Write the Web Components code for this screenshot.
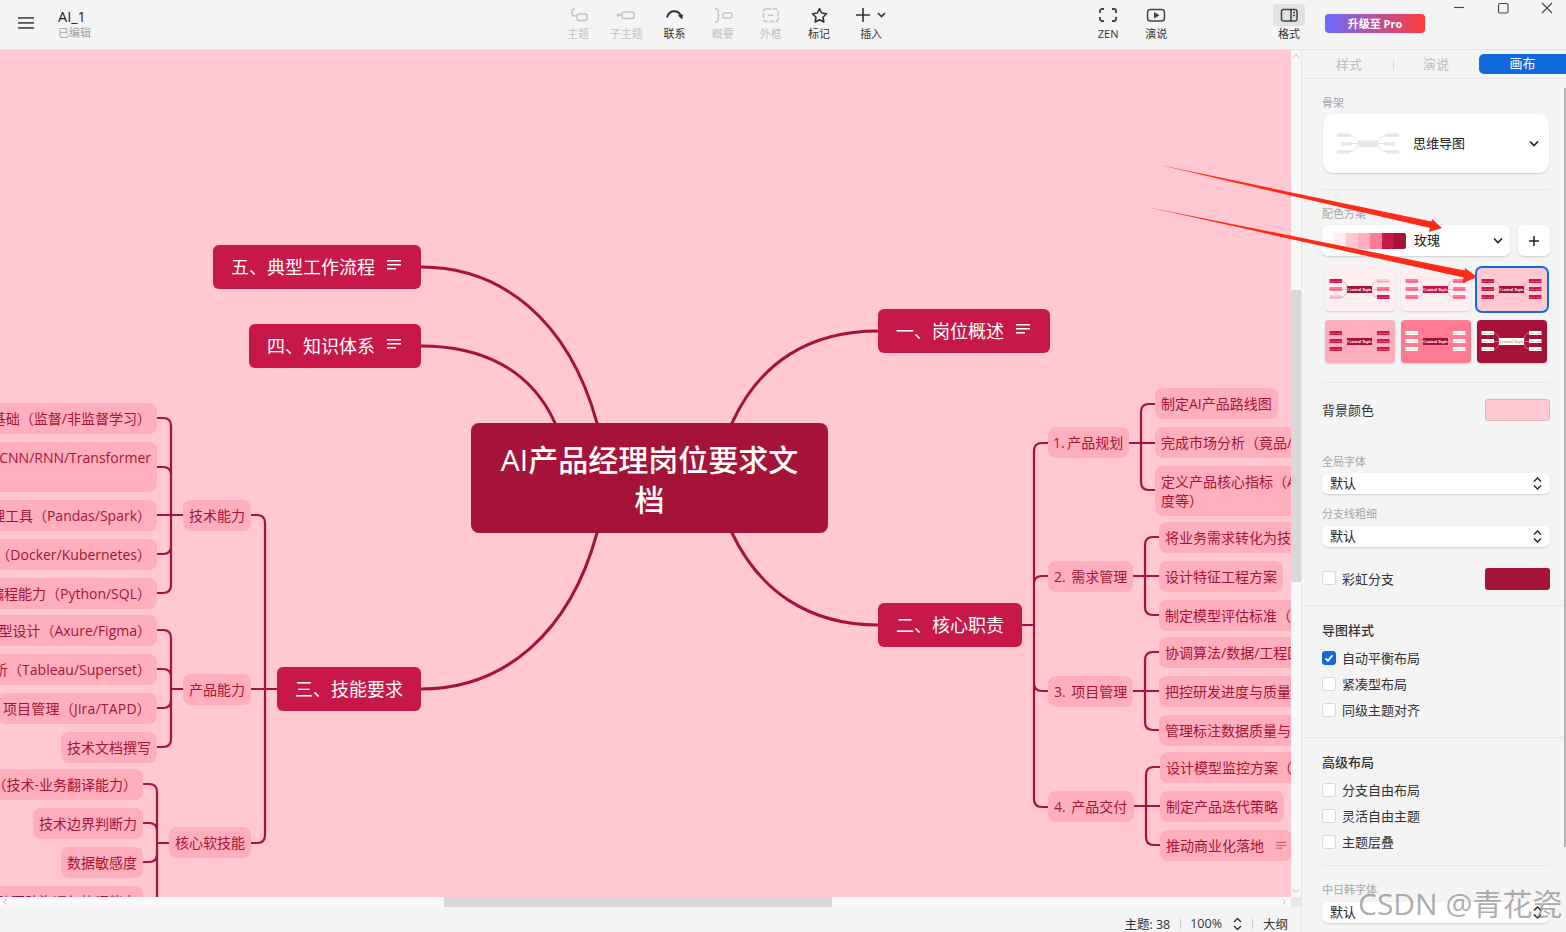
<!DOCTYPE html>
<html lang="zh-CN">
<head>
<meta charset="utf-8">
<title>AI_1</title>
<style>
html,body{margin:0;padding:0;background:#f4f4f4;font-family:"Open Sans","Noto Sans CJK SC",sans-serif;}
</style>
</head>
<body>
<app-shell>
  <top-bar slot="top">
    <doc-title slot="title" name="AI_1" state="已编辑"></doc-title>
    <tool-btn slot="tools" label="主题" off><svg viewBox="0 0 32 22" fill="none" stroke="#c2c2c2" stroke-width="1.5"><path d="M13 5h-1a2 2 0 0 0-2 2v2a3 3 0 0 0 3 3h2"/><rect x="15" y="10" width="10" height="6.5" rx="2"/></svg></tool-btn>
    <tool-btn slot="tools" label="子主题" off><svg viewBox="0 0 32 22" fill="none" stroke="#c2c2c2" stroke-width="1.5"><circle cx="8.5" cy="11" r="1.8" fill="#c2c2c2" stroke="none"/><path d="M9 11h3"/><rect x="12" y="8" width="12" height="6.5" rx="2"/></svg></tool-btn>
    <tool-btn slot="tools" label="联系"><svg viewBox="0 0 32 22" fill="none" stroke="#333" stroke-width="2"><path d="M9 13.5C11 5.5 20 5.5 23 12"/><path d="M19.8 11.6 25 10.6 24.2 15.6z" fill="#333" stroke="none"/></svg></tool-btn>
    <tool-btn slot="tools" label="概要" off><svg viewBox="0 0 32 22" fill="none" stroke="#c2c2c2" stroke-width="1.4"><path d="M8 5h1.5A1.5 1.5 0 0 1 11 6.500V10a1.500 1.500 0 0 0 1.500 1.500A1.500 1.500 0 0 0 11 13v3.500A1.500 1.500 0 0 1 9.500 18H8"/><rect x="16" y="9" width="9" height="5" rx="1.500"/></svg></tool-btn>
    <tool-btn slot="tools" label="外框" off><svg viewBox="0 0 32 22" fill="none" stroke="#c2c2c2" stroke-width="1.4"><rect x="8.500" y="5" width="14.500" height="12.500" rx="2.500" stroke-dasharray="5 1.500"/><path d="M13 11.200h5.500"/></svg></tool-btn>
    <tool-btn slot="tools" label="标记"><svg viewBox="0 0 32 22" fill="none" stroke="#333" stroke-width="1.600" stroke-linejoin="round"><path d="M16.500 4.500 18.600 9 23.500 9.700 20 13.200 20.800 18 16.500 15.700 12.200 18 13 13.200 9.500 9.700 14.400 9z"/></svg></tool-btn>
    <tool-btn slot="tools" label="插入" wide><svg viewBox="0 0 32 22" fill="none" stroke="#333" stroke-width="1.600"><path d="M1 11h14M8 4v14"/><path d="M23 9l3.500 3.500L30 9"/></svg></tool-btn>
    <tool-btn slot="view" label="ZEN"><svg viewBox="0 0 32 22" fill="none" stroke="#444" stroke-width="1.800"><path d="M8 9V7a2 2 0 0 1 2-2h2M20 5h2a2 2 0 0 1 2 2v2M24 13v2a2 2 0 0 1-2 2h-2M12 17h-2a2 2 0 0 1-2-2v-2"/></svg></tool-btn>
    <tool-btn slot="view" label="演说"><svg viewBox="0 0 32 22" fill="none" stroke="#444" stroke-width="1.500"><rect x="7.500" y="5.500" width="17" height="11.500" rx="3"/><path d="M14 8v6.500l5.500-3.200z" fill="#444" stroke="none"/></svg></tool-btn>
    <tool-btn slot="format" label="格式" active><svg viewBox="0 0 32 22" fill="none" stroke="#444" stroke-width="1.500"><rect x="8.500" y="5.500" width="15.500" height="11.500" rx="2"/><path d="M18 5.500V17M20 8.500h2M20 11.500h2"/></svg></tool-btn>
    <upgrade-pill slot="upgrade">升级至 Pro</upgrade-pill>
    <win-controls slot="win"></win-controls>
  </top-bar>

  <mind-canvas slot="canvas">
    <mm-node kind="main" note style="left:213px;top:195px">五、典型工作流程</mm-node>
    <mm-node kind="main" note style="left:249px;top:274px">四、知识体系</mm-node>
    <mm-node kind="main" note style="left:878px;top:259px">一、岗位概述</mm-node>
    <mm-node kind="main" style="left:878px;top:553px">二、核心职责</mm-node>
    <mm-node kind="main" style="left:277px;top:617px">三、技能要求</mm-node>
    <mm-node kind="root" style="left:471px;top:373px">AI产品经理岗位要求文<br>档</mm-node>

    <mm-node style="right:1134px;top:353px">机器学习基础（监督/非监督学习）</mm-node>
    <mm-node style="right:1134px;top:392px;text-align:left">了解深度学习框架（CNN/RNN/Transformer<br>等）</mm-node>
    <mm-node style="right:1134px;top:450px">数据处理工具（Pandas/Spark）</mm-node>
    <mm-node style="right:1134px;top:489px">模型部署（Docker/Kubernetes）</mm-node>
    <mm-node style="right:1134px;top:528px">基础编程能力（Python/SQL）</mm-node>
    <mm-node style="right:1134px;top:565px">原型设计（Axure/Figma）</mm-node>
    <mm-node style="right:1134px;top:604px">数据分析（Tableau/Superset）</mm-node>
    <mm-node style="right:1134px;top:643px;letter-spacing:.2px">项目管理（Jira/TAPD）</mm-node>
    <mm-node style="right:1134px;top:682px">技术文档撰写</mm-node>
    <mm-node style="right:1148px;top:719px">需求转化（技术-业务翻译能力）</mm-node>
    <mm-node style="right:1148px;top:758px">技术边界判断力</mm-node>
    <mm-node style="right:1148px;top:797px">数据敏感度</mm-node>
    <mm-node style="right:1148px;top:836px">跨团队沟通与协调能力</mm-node>
    <mm-node style="left:183px;top:450px">技术能力</mm-node>
    <mm-node style="left:183px;top:624px">产品能力</mm-node>
    <mm-node style="left:169px;top:777px">核心软技能</mm-node>

    <mm-node style="left:1048px;top:377px;width:81px;word-spacing:-1px;padding-left:5px">1. 产品规划</mm-node>
    <mm-node style="left:1155px;top:338px">制定AI产品路线图</mm-node>
    <mm-node style="left:1155px;top:377px">完成市场分析（竟品/用户/技术）</mm-node>
    <mm-node style="left:1155px;top:416px">定义产品核心指标（AUC/准确率/满意<br>度等）</mm-node>
    <mm-node style="left:1048px;top:511px;width:85px;word-spacing:2px">2. 需求管理</mm-node>
    <mm-node style="left:1159px;top:472px">将业务需求转化为技术需求</mm-node>
    <mm-node style="left:1159px;top:511px">设计特征工程方案</mm-node>
    <mm-node style="left:1159px;top:550px">制定模型评估标准（准确率）</mm-node>
    <mm-node style="left:1048px;top:626px;width:85px;word-spacing:2px">3. 项目管理</mm-node>
    <mm-node style="left:1159px;top:587px">协调算法/数据/工程团队</mm-node>
    <mm-node style="left:1159px;top:626px">把控研发进度与质量风险</mm-node>
    <mm-node style="left:1159px;top:665px">管理标注数据质量与进度</mm-node>
    <mm-node style="left:1048px;top:741px;width:86px;word-spacing:2px">4. 产品交付</mm-node>
    <mm-node style="left:1160px;top:702px">设计模型监控方案（漂移）</mm-node>
    <mm-node style="left:1160px;top:741px">制定产品迭代策略</mm-node>
    <mm-node note style="left:1160px;top:780px">推动商业化落地</mm-node>
  </mind-canvas>
  <v-track slot="vbar"></v-track>
  <h-track slot="hbar"></h-track>
  <status-bar slot="status"></status-bar>

  <side-panel slot="panel">
    <p-label style="margin-top:16px">骨架</p-label>
    <skeleton-card style="margin-top:3px">思维导图</skeleton-card>
    <p-div style="margin-top:16px"></p-div>
    <p-label style="margin-top:16px">配色方案</p-label>
    <palette-row style="margin-top:3px">玫瑰</palette-row>
    <theme-grid style="margin-top:12px">
      <theme-thumb bg="#FFEFF3" c="#A51339" ct="#fff" l="#C8184A,#FF7A93,#FFC8D2" r="#FFC8D2,#FF7A93,#C8184A"></theme-thumb>
      <theme-thumb bg="#FFEFF3" c="#C8184A" ct="#fff" l="#FF7A93,#FF7A93,#FF7A93" r="#FF7A93,#FF7A93,#FF7A93"></theme-thumb>
      <theme-thumb selected bg="#FFC8D2" c="#A51339" ct="#fff" l="#C8184A,#C8184A,#C8184A" r="#C8184A,#C8184A,#C8184A"></theme-thumb>
      <theme-thumb bg="#FFAEBD" c="#A51339" ct="#fff" l="#C8184A,#C8184A,#C8184A" r="#C8184A,#C8184A,#C8184A"></theme-thumb>
      <theme-thumb bg="#FF7A93" c="#A51339" ct="#fff" pt="#A51339" l="#fff,#fff,#fff" r="#fff,#fff,#fff"></theme-thumb>
      <theme-thumb bg="#A51339" c="#fff" ct="#D98" pt="#A51339" line="#d8889c" l="#fff,#fff,#fff" r="#fff,#fff,#fff"></theme-thumb>
    </theme-grid>
    <p-div style="margin-top:19px"></p-div>
    <color-row color="#FFC8D2" bordered style="margin-top:16px">背景颜色</color-row>
    <p-label style="margin-top:33px">全局字体</p-label>
    <p-select style="margin-top:3px">默认</p-select>
    <p-label style="margin-top:12px">分支线粗细</p-label>
    <p-select style="margin-top:4px">默认</p-select>
    <color-row color="#A51339" check style="margin-top:21px">彩虹分支</color-row>
    <p-div full style="margin-top:15px"></p-div>
    <p-head style="margin-top:16px">导图样式</p-head>
    <p-check checked style="margin-top:11px">自动平衡布局</p-check>
    <p-check style="margin-top:6px">紧凑型布局</p-check>
    <p-check style="margin-top:6px">同级主题对齐</p-check>
    <p-div full style="margin-top:16px"></p-div>
    <p-head style="margin-top:16px">高级布局</p-head>
    <p-check style="margin-top:11px">分支自由布局</p-check>
    <p-check style="margin-top:6px">灵活自由主题</p-check>
    <p-check style="margin-top:6px">主题层叠</p-check>
    <p-div style="margin-top:12px"></p-div>
    <p-label style="margin-top:16px">中日韩字体</p-label>
    <p-select style="margin-top:4px">默认</p-select>
  </side-panel>
  <red-arrows slot="over"></red-arrows>
  <water-mark slot="over">CSDN @青花瓷</water-mark>
</app-shell>

<script>
const FONT = '"Open Sans","Noto Sans CJK SC",sans-serif';
function def(name, html, init){
  customElements.define(name, class extends HTMLElement{
    constructor(){
      super();
      const r = this.attachShadow({mode:'open'});
      r.innerHTML = typeof html === 'function' ? html(this) : html;
    }
    connectedCallback(){ if(init && !this._i){ this._i = 1; init(this, this.shadowRoot); } }
  });
}

def('app-shell', `<style>
:host{display:block;position:relative;width:1566px;height:932px;overflow:hidden;background:#f4f4f4;color:#333;font-family:${FONT}}
.main{display:flex;height:882px}
.work{width:1301px;display:grid;grid-template-columns:1291px 10px;grid-template-rows:847px 10px 25px}
.status{grid-column:1 / 3}
.corner{background:#e8e8e8}
.panel{width:265px;position:relative}
</style>
<slot name="top"></slot>
<div class="main">
  <div class="work">
    <slot name="canvas"></slot><slot name="vbar"></slot>
    <slot name="hbar"></slot><div class="corner"></div>
    <div class="status"><slot name="status"></slot></div>
  </div>
  <div class="panel"><slot name="panel"></slot></div>
</div>
<slot name="over"></slot>`);

def('top-bar', `<style>
:host{display:grid;grid-template-columns:554px 530px 181px 60px 125px 116px;height:49px;background:#f4f4f4;border-bottom:1px solid #e4e4e4}
.g{display:flex}
</style>
<div class="g"><slot name="title"></slot></div>
<div class="g"><slot name="tools"></slot></div>
<div class="g"><slot name="view"></slot></div>
<div class="g"><slot name="format"></slot></div>
<div class="g"><slot name="upgrade"></slot></div>
<div class="g"><slot name="win"></slot></div>`);

def('doc-title', el => `<style>
:host{display:flex;align-items:flex-start}
svg{width:16px;height:12px;margin:17px 24px 0 18px;flex:none}
.t{padding-top:9px}
.n{font-size:14.500px;line-height:16px;color:#222}
.s{font-size:11px;line-height:14px;color:#a0a0a0;margin-top:1px}
</style>
<svg viewBox="0 0 16 12" fill="#555"><rect y="0" width="16" height="1.800"/><rect y="5" width="16" height="1.800"/><rect y="10" width="16" height="1.800"/></svg>
<div class="t"><div class="n">${el.getAttribute('name')||'AI_1'}</div><div class="s">${el.getAttribute('state')||'已编辑'}</div></div>`);

def('tool-btn', el => `<style>
:host{display:flex;flex-direction:column;align-items:center;width:${el.hasAttribute('wide')?'56px':'48.200px'};flex:none;font-size:11px;color:#333}
:host([off]){color:#c2c2c2}
.i{width:32px;height:22px;margin-top:4px;border-radius:4px}
:host([active]) .i{background:#e2e2e2}
::slotted(svg){display:block;width:32px;height:22px}
.l{line-height:14px;margin-top:1px;white-space:nowrap}
</style><div class="i"><slot></slot></div><div class="l">${el.getAttribute('label')}</div>`);

def('upgrade-pill', `<style>
:host{display:flex;align-items:center;justify-content:center;width:100px;height:19px;box-sizing:border-box;padding-bottom:1px;margin-top:14px;border-radius:4px;background:linear-gradient(90deg,#6B6BFF,#FF3B3B);color:#fff;font-size:11px;font-weight:700;box-shadow:0 0 1px rgba(0,0,0,.2)}
</style><slot></slot>`);

def('win-controls', `<style>
:host{display:block;flex:1}
svg{display:block;width:116px;height:20px}
</style><svg viewBox="0 0 116 20" fill="none" stroke="#444" stroke-width="1.100">
<path d="M4 7.500h10"/><rect x="48.500" y="3.500" width="9.500" height="9.500" rx="1.500"/><path d="M92 3l10 10M102 3L92 13"/></svg>`);

def('mind-canvas', `<style>
:host{display:block;position:relative;width:1291px;height:847px;background:#FFC8D2;overflow:hidden}
svg{position:absolute;left:0;top:0;width:1291px;height:847px}
</style>
<svg viewBox="0 50 1291 847" fill="none" stroke="#A51339" stroke-width="2.200" stroke-linecap="round">
  <g stroke-width="3">
    <path d="M421 267C500 267 568 318 597 423"/>
    <path d="M421 346C480 346 530 368 555 423"/>
    <path d="M878 331C810 331 760 362 732 423"/>
    <path d="M878 625C810 625 760 592 732 533"/>
    <path d="M421 689C505 689 570 632 597 533"/>
  </g>
  <path d="M251 515H257Q265 515 265 523V835Q265 843 257 843H251M251 689H277"/>
  <path d="M157 418H163Q171 418 171 426V585Q171 593 163 593H157M157 467H163Q171 467 171 475M157 554H163Q171 554 171 546M157 515H183"/>
  <path d="M157 630H163Q171 630 171 638V739Q171 747 163 747H157M157 669H163Q171 669 171 677M157 708H163Q171 708 171 700M171 689H183"/>
  <path d="M143 784H149Q157 784 157 792V900M143 823H149Q157 823 157 831M143 862H149Q157 862 157 854M157 843H169"/>
  <path d="M1022 625H1034M1048 443H1042Q1034 443 1034 451V799Q1034 807 1042 807H1048M1048 576H1042Q1034 576 1034 584M1048 691H1042Q1034 691 1034 683"/>
  <path d="M1129 443H1155M1155 404H1149Q1141 404 1141 412V482Q1141 490 1149 490H1155"/>
  <path d="M1133 576H1159M1159 537H1153Q1145 537 1145 545V607Q1145 615 1153 615H1159"/>
  <path d="M1133 691H1159M1159 652H1153Q1145 652 1145 660V722Q1145 730 1153 730H1159"/>
  <path d="M1134 806H1160M1160 767H1154Q1146 767 1146 775V837Q1146 845 1154 845H1160"/>
</svg><slot></slot>`);

def('mm-node', el => {
  const note = el.hasAttribute('note');
  const icon = note ? `<svg class="n" viewBox="0 0 14 10" fill="currentColor"><rect width="14" height="1.500"/><rect y="4" width="14" height="1.500"/><rect y="8" width="9" height="1.500"/></svg>` : '';
  return `<style>
:host{position:absolute;display:flex;align-items:flex-start;white-space:nowrap;box-sizing:border-box;background:#FFAEBD;color:#A51339;font-size:14px;line-height:19px;padding:6px;border-radius:8px;z-index:1}
:host([kind=main]){background:#C8184A;color:#fff;font-size:18px;line-height:24px;padding:10px 18px;border-radius:6px}
:host([kind=root]){background:#A51339;color:#fff;font-size:30px;font-weight:500;line-height:40px;padding:17px 0 0;width:357px;height:110px;justify-content:center;text-align:center;border-radius:8px}
.n{width:10px;height:9px;margin:5px 0 0 12px;opacity:.55;flex:none}
:host([kind=main]) .n{width:14px;height:10px;margin:5px 2px 0 12px;opacity:1}
</style><div><slot></slot></div>${icon}`;
});

def('v-track', `<style>
:host{display:block;position:relative;background:#f9f9f9;height:847px}
.th{position:absolute;left:0;right:0;top:240px;height:292px;background:#d8d8d8}
svg{position:absolute;left:0;width:10px;height:6px}
</style>
<svg style="top:3px" viewBox="0 0 10 6" fill="none" stroke="#bbb"><path d="M1.500 5L5 1.500 8.500 5"/></svg>
<div class="th"></div>
<svg style="bottom:3px" viewBox="0 0 10 6" fill="none" stroke="#bbb"><path d="M1.500 1L5 4.500 8.500 1"/></svg>`);

def('h-track', `<style>
:host{display:block;position:relative;background:#f9f9f9;height:10px}
.th{position:absolute;left:444px;width:388px;top:0;bottom:0;background:#d8d8d8}
svg{position:absolute;top:2px;width:6px;height:6px}
</style>
<svg style="left:2px" viewBox="0 0 6 6" fill="none" stroke="#bbb"><path d="M4.500 .5L1.500 3l3 2.500"/></svg>
<div class="th"></div>
<svg style="right:4px" viewBox="0 0 6 6" fill="none" stroke="#bbb"><path d="M1.500 .5L4.500 3l-3 2.500"/></svg>`);

def('status-bar', `<style>
:host{display:flex;justify-content:flex-end;align-items:center;height:25px;box-sizing:border-box;padding:8px 13px 0 0;font-size:12.500px;color:#333;background:#f4f4f4}
i{display:block;width:1px;height:10px;background:#ccc}
svg{width:9px;height:14px;margin:0 10px 0 11px}
.a{margin-right:10px}.b{margin-left:10px}.c{margin-left:9px}
</style>
<span class="a">主题: 38</span><i></i><span class="c">100%</span>
<svg viewBox="0 0 9 14" fill="none" stroke="#333" stroke-width="1.400"><path d="M1 5l3.500-3.500L8 5M1 9l3.500 3.500L8 9"/></svg>
<i></i><span class="b">大纲</span>`);

def('side-panel', `<style>
:host{display:block;position:relative;width:265px;height:882px;overflow:hidden;box-sizing:border-box;border-left:1px solid #e6e6e6;background:#f4f4f4}
.tabs{display:flex;align-items:center;height:28px;border-bottom:1px solid #e6e6e6;font-size:13px;color:#bcbcbc;position:relative}
.tabs span{width:84px;text-align:center;flex:none;padding-bottom:2px}
.tabs span:first-child{width:94px;margin-right:-3px}
.tabs i{width:1px;height:9px;background:#d2d2d2;flex:none}
.tabs b{font-weight:400;width:87px;height:20px;line-height:19px;text-align:center;color:#fff;background:#1269DE;border-radius:5px 0 0 5px;margin-left:1px}
.body{padding:0 16px 0 20px}
.sb{position:absolute;right:0;top:38px;width:2px;height:759px;background:#b4b4b4}
</style>
<div class="tabs"><span>样式</span><i></i><span>演说</span><b>画布</b></div>
<div class="body"><slot></slot></div>
<div class="sb"></div>`);

def('p-label', `<style>:host{display:block;font-size:11px;line-height:16px;color:#a6a6a6}</style><slot></slot>`);
def('p-head', `<style>:host{display:block;font-size:13px;line-height:16px;color:#333;font-weight:500}</style><slot></slot>`);
def('p-div', `<style>:host{display:block;height:1px;background:#e6e6e6}:host([full]){margin-left:-20px;margin-right:-16px}</style>`);

const BOX = 'background:#fff;border-radius:6px;box-shadow:0 1px 2px rgba(0,0,0,.16)';
def('p-select', `<style>
:host{display:flex;align-items:center;justify-content:space-between;height:21px;box-sizing:border-box;padding:0 8px;font-size:13px;color:#222;${BOX}}
span{padding-bottom:2px}
svg{width:9px;height:15px}
</style><span><slot></slot></span>
<svg viewBox="0 0 9 15" fill="none" stroke="#222" stroke-width="1.400"><path d="M1 5.500l3.500-3.500L8 5.500M1 9.500L4.500 13 8 9.500"/></svg>`);

def('p-check', el => `<style>
:host{display:flex;align-items:center;height:20px;font-size:13px;color:#333}
.b{width:14px;height:14px;box-sizing:border-box;border:1px solid #d6d6d6;border-radius:3px;background:#fff;margin:0 6px 2px 0;flex:none}
:host([checked]) .b{background:#1269DE;border-color:#1269DE}
svg{display:block;width:12px;height:12px}
span{padding-bottom:4px}
</style><div class="b">${el.hasAttribute('checked')?'<svg viewBox="0 0 12 12" fill="none" stroke="#fff" stroke-width="1.800"><path d="M2.500 6.300l2.500 2.500 4.500-5.500"/></svg>':''}</div><span><slot></slot></span>`);

def('color-row', el => `<style>
:host{display:flex;align-items:center;justify-content:space-between;height:22px;font-size:13px;color:#333}
.l{display:flex;align-items:center;padding-bottom:2px}
.b{width:14px;height:14px;box-sizing:border-box;border:1px solid #d6d6d6;border-radius:3px;background:#fff;margin-right:6px}
.s{width:65px;height:22px;box-sizing:border-box;border-radius:3px;background:${el.getAttribute('color')};${el.hasAttribute('bordered')?'border:1px solid #e4b4be;':''}}
</style><div class="l">${el.hasAttribute('check')?'<div class="b"></div>':''}<slot></slot></div><div class="s"></div>`);

def('skeleton-card', `<style>
:host{display:flex;align-items:center;height:59px;margin-left:1px;margin-right:1px;box-sizing:border-box;padding:0 10px 0 14px;font-size:13px;color:#222;background:#fff;border-radius:10px;box-shadow:0 1px 2px rgba(0,0,0,.16)}
.t{width:62px;height:21px;margin-right:14px;flex:none}
span{flex:1;padding-bottom:2px}
.c{width:10px;height:7px}
</style>
<svg class="t" viewBox="0 0 62 21" fill="none" stroke="#dcdcdc" stroke-width=".8">
<path d="M13 2.500c8 0 5 8 13 8M15 10.500h11M13 18.500c8 0 5-8 13-8M49 2.500c-8 0-5 8-13 8M47 10.500H36M49 18.500c-8 0-5-8-13-8"/>
<g fill="#e8e8e8" stroke="none"><rect x="20" y="7.500" width="21" height="6.500"/><rect x="0" y="0.500" width="13" height="3.500"/><rect x="4" y="9" width="11" height="3.500"/><rect x="0" y="17" width="13" height="3.500"/><rect x="49" y="0.500" width="13" height="3.500"/><rect x="47" y="9" width="11" height="3.500"/><rect x="49" y="17" width="13" height="3.500"/></g></svg>
<span><slot></slot></span>
<svg class="c" viewBox="0 0 10 7" fill="none" stroke="#222" stroke-width="1.700"><path d="M1 1.500l4 4 4-4"/></svg>`);

def('palette-row', `<style>
:host{display:flex;gap:8px;height:31px}
.sel{display:flex;align-items:center;width:188px;box-sizing:border-box;padding:0 7px 0 12px;font-size:13px;color:#222;${BOX}}
.sw{display:flex;height:16px;margin-right:8px;flex:none}
.sw i{display:block;width:12px;height:16px}
.sw i:last-child{border-radius:0 2px 2px 0}
span{flex:1;padding-bottom:2px}
.c{width:10px;height:7px}
.plus{width:32px;display:flex;align-items:center;justify-content:center;${BOX}}
.plus svg{width:10px;height:10px}
</style>
<div class="sel"><div class="sw"><i style="background:#FFEFF3"></i><i style="background:#FFC8D2"></i><i style="background:#FFAEBD"></i><i style="background:#FF7A93"></i><i style="background:#C8184A"></i><i style="background:#A51339"></i></div>
<span><slot></slot></span>
<svg class="c" viewBox="0 0 10 7" fill="none" stroke="#222" stroke-width="1.600"><path d="M1 1.500l4 4 4-4"/></svg></div>
<div class="plus"><svg viewBox="0 0 10 10" fill="none" stroke="#222" stroke-width="1.500"><path d="M0 5h10M5 0v10"/></svg></div>`);

def('theme-grid', `<style>
:host{display:grid;grid-template-columns:70px 70px 70px;column-gap:6px;row-gap:9px;padding-left:3px;height:95px}
</style><slot></slot>`);

def('theme-thumb', el => {
  const a = n => el.getAttribute(n);
  const l = a('l').split(','), r = a('r').split(',');
  const pt = c => c==='#fff' ? (a('pt')||'#A51339') : (c==='#C8184A' ? '#fff' : '#A51339');
  const ys = [11,19,27];
  let p = '';
  ys.forEach((y,i)=>{
    p += `<rect x="4.500" y="${y}" width="12.500" height="4" fill="${l[i]}"/><text x="10.700" y="${y+2.900}" fill="${pt(l[i])}" fill-opacity=".45" font-size="2.600" text-anchor="middle">Main Topic</text>`;
    p += `<rect x="52" y="${y}" width="12.500" height="4" fill="${r[i]}"/><text x="58.200" y="${y+2.900}" fill="${pt(r[i])}" fill-opacity=".45" font-size="2.600" text-anchor="middle">Main Topic</text>`;
  });
  const line = a('line') || '#EE9DB0';
  return `<style>
:host{display:block;width:70px;height:43px;border-radius:4px;box-shadow:0 1px 2px rgba(0,0,0,.14);background:${a('bg')};position:relative}
:host([selected]){outline:2px solid #1269DE;outline-offset:0;border-radius:5px}
svg{display:block;width:70px;height:43px}
text{font-family:"Liberation Serif",serif;font-weight:700}
</style><svg viewBox="0 0 70 43" fill="none">
<path d="M17 13c5 0 5 8.500 6 8.500M17 21.500h5M17 29c5 0 5-7.500 6-7.500M52 13c-5 0-5 8.500-6 8.500M52 21.500h-5M52 29c-5 0-5-7.500-6-7.500" stroke="${line}" stroke-width=".8"/>
<rect x="22" y="18" width="25" height="7" fill="${a('c')}"/>
<text x="34.500" y="22.800" fill="${a('ct')}" font-size="4.200" text-anchor="middle">Central Topic</text>${p}</svg>`;
});

def('red-arrows', `<style>
:host{position:absolute;left:0;top:0;width:1566px;height:932px;pointer-events:none;display:block;z-index:5}
svg{display:block;width:1566px;height:932px}
</style><svg viewBox="0 0 1566 932" fill="#FF2A18">
<path d="M1160 165 1431.500 221.500 1432 219 1442 228 1429 232 1430 228z"/>
<path d="M1147 207 1464.500 270.500 1465 268 1477 277 1463 283 1463.500 277.500z"/>
</svg>`);

def('water-mark', `<style>
:host{position:absolute;left:1358px;top:883px;font-family:"Open Sans","Noto Sans CJK SC",sans-serif;font-size:30px;line-height:42px;color:rgba(120,120,120,.62);white-space:nowrap;pointer-events:none;z-index:6}
</style><slot></slot>`);
</script>
</body>
</html>
